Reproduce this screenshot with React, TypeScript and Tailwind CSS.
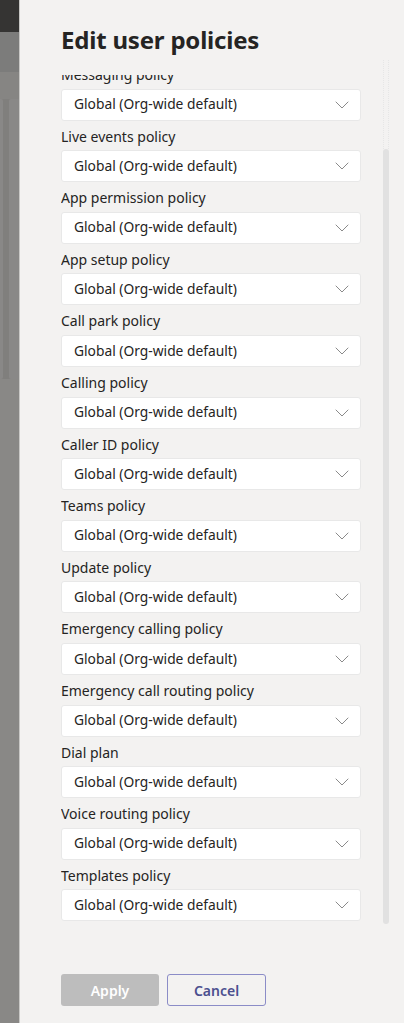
import React from 'react';

const policies = [
  'Messaging policy',
  'Live events policy',
  'App permission policy',
  'App setup policy',
  'Call park policy',
  'Calling policy',
  'Caller ID policy',
  'Teams policy',
  'Update policy',
  'Emergency calling policy',
  'Emergency call routing policy',
  'Dial plan',
  'Voice routing policy',
  'Templates policy',
];

const Chevron: React.FC = () => (
  <svg width="14" height="8" viewBox="0 0 14 8" fill="none" className="shrink-0">
    <path d="M1 1l6 6 6-6" stroke="#8a8a8a" strokeWidth="1" strokeLinecap="round" strokeLinejoin="round" />
  </svg>
);

const PolicyField: React.FC<{ label: string }> = ({ label }) => (
  <div className="mb-[6px]">
    <div className="text-[14px] leading-[1.4] text-[#252423] mb-[4px]">{label}</div>
    <div className="h-[32px] w-[300px] bg-white rounded-[3px] border border-[#e8e8e8] flex items-center justify-between pl-[12px] pr-[11px]">
      <span className="text-[13.8px] text-[#252423]">Global (Org-wide default)</span>
      <Chevron />
    </div>
  </div>
);

const App: React.FC = () => {
  return (
    <div
      className="flex w-[404px] h-[1023px] overflow-hidden bg-[#f3f2f1]"
      style={{ fontFamily: '"Segoe UI", "Noto Sans", "Open Sans", sans-serif' }}
    >
      {/* dimmed page behind the panel */}
      <div className="w-[19px] shrink-0 flex flex-col bg-[#898886]">
        <div className="h-[32px] bg-[#353433]" />
        <div className="h-[40px] bg-[#7c7c7b]" />
        <div className="h-[27px] bg-[#868583]" />
        <div className="h-[280px] flex gap-[6px] bg-[#807f7d]">
          <div className="w-[3px] bg-[#898887] rounded-r-[2px]" />
          <div className="flex-1 bg-[#898887] rounded-l-[2px]" />
        </div>
        <div className="flex-1" />
      </div>
      <div className="w-px shrink-0 bg-[#c9c8c6]" />

      {/* side panel */}
      <div className="relative flex-1 flex flex-col pl-[41px] pt-[24px]">
        <h1 className="text-[24px] leading-[32px] font-bold text-[#252423] tracking-[-0.2px]">Edit user policies</h1>

        <div className="mt-[19px] h-[865px] overflow-hidden">
          <div className="-mt-[10px]">
            {policies.map(p => (
              <PolicyField key={p} label={p} />
            ))}
          </div>
        </div>

        <div className="mt-[34px] flex gap-[8px]">
          <button className="w-[98px] h-[32px] rounded-[3px] bg-[#bdbdbd] text-white text-[14px] font-semibold">Apply</button>
          <button className="w-[99px] h-[32px] rounded-[3px] border border-[#8b8cc7] bg-[#f3f2f1] text-[#4b4f8f] text-[14px] font-semibold">Cancel</button>
        </div>

        {/* scrollbar */}
        <div className="absolute right-[15px] top-[60px] w-[6px] h-[89px] border-x border-dotted border-[#e6e6e6]" />
        <div className="absolute right-[15px] top-[149px] w-[6px] h-[775px] rounded-full bg-[#e1e1e1]" />
      </div>
    </div>
  );
};

export default App;
